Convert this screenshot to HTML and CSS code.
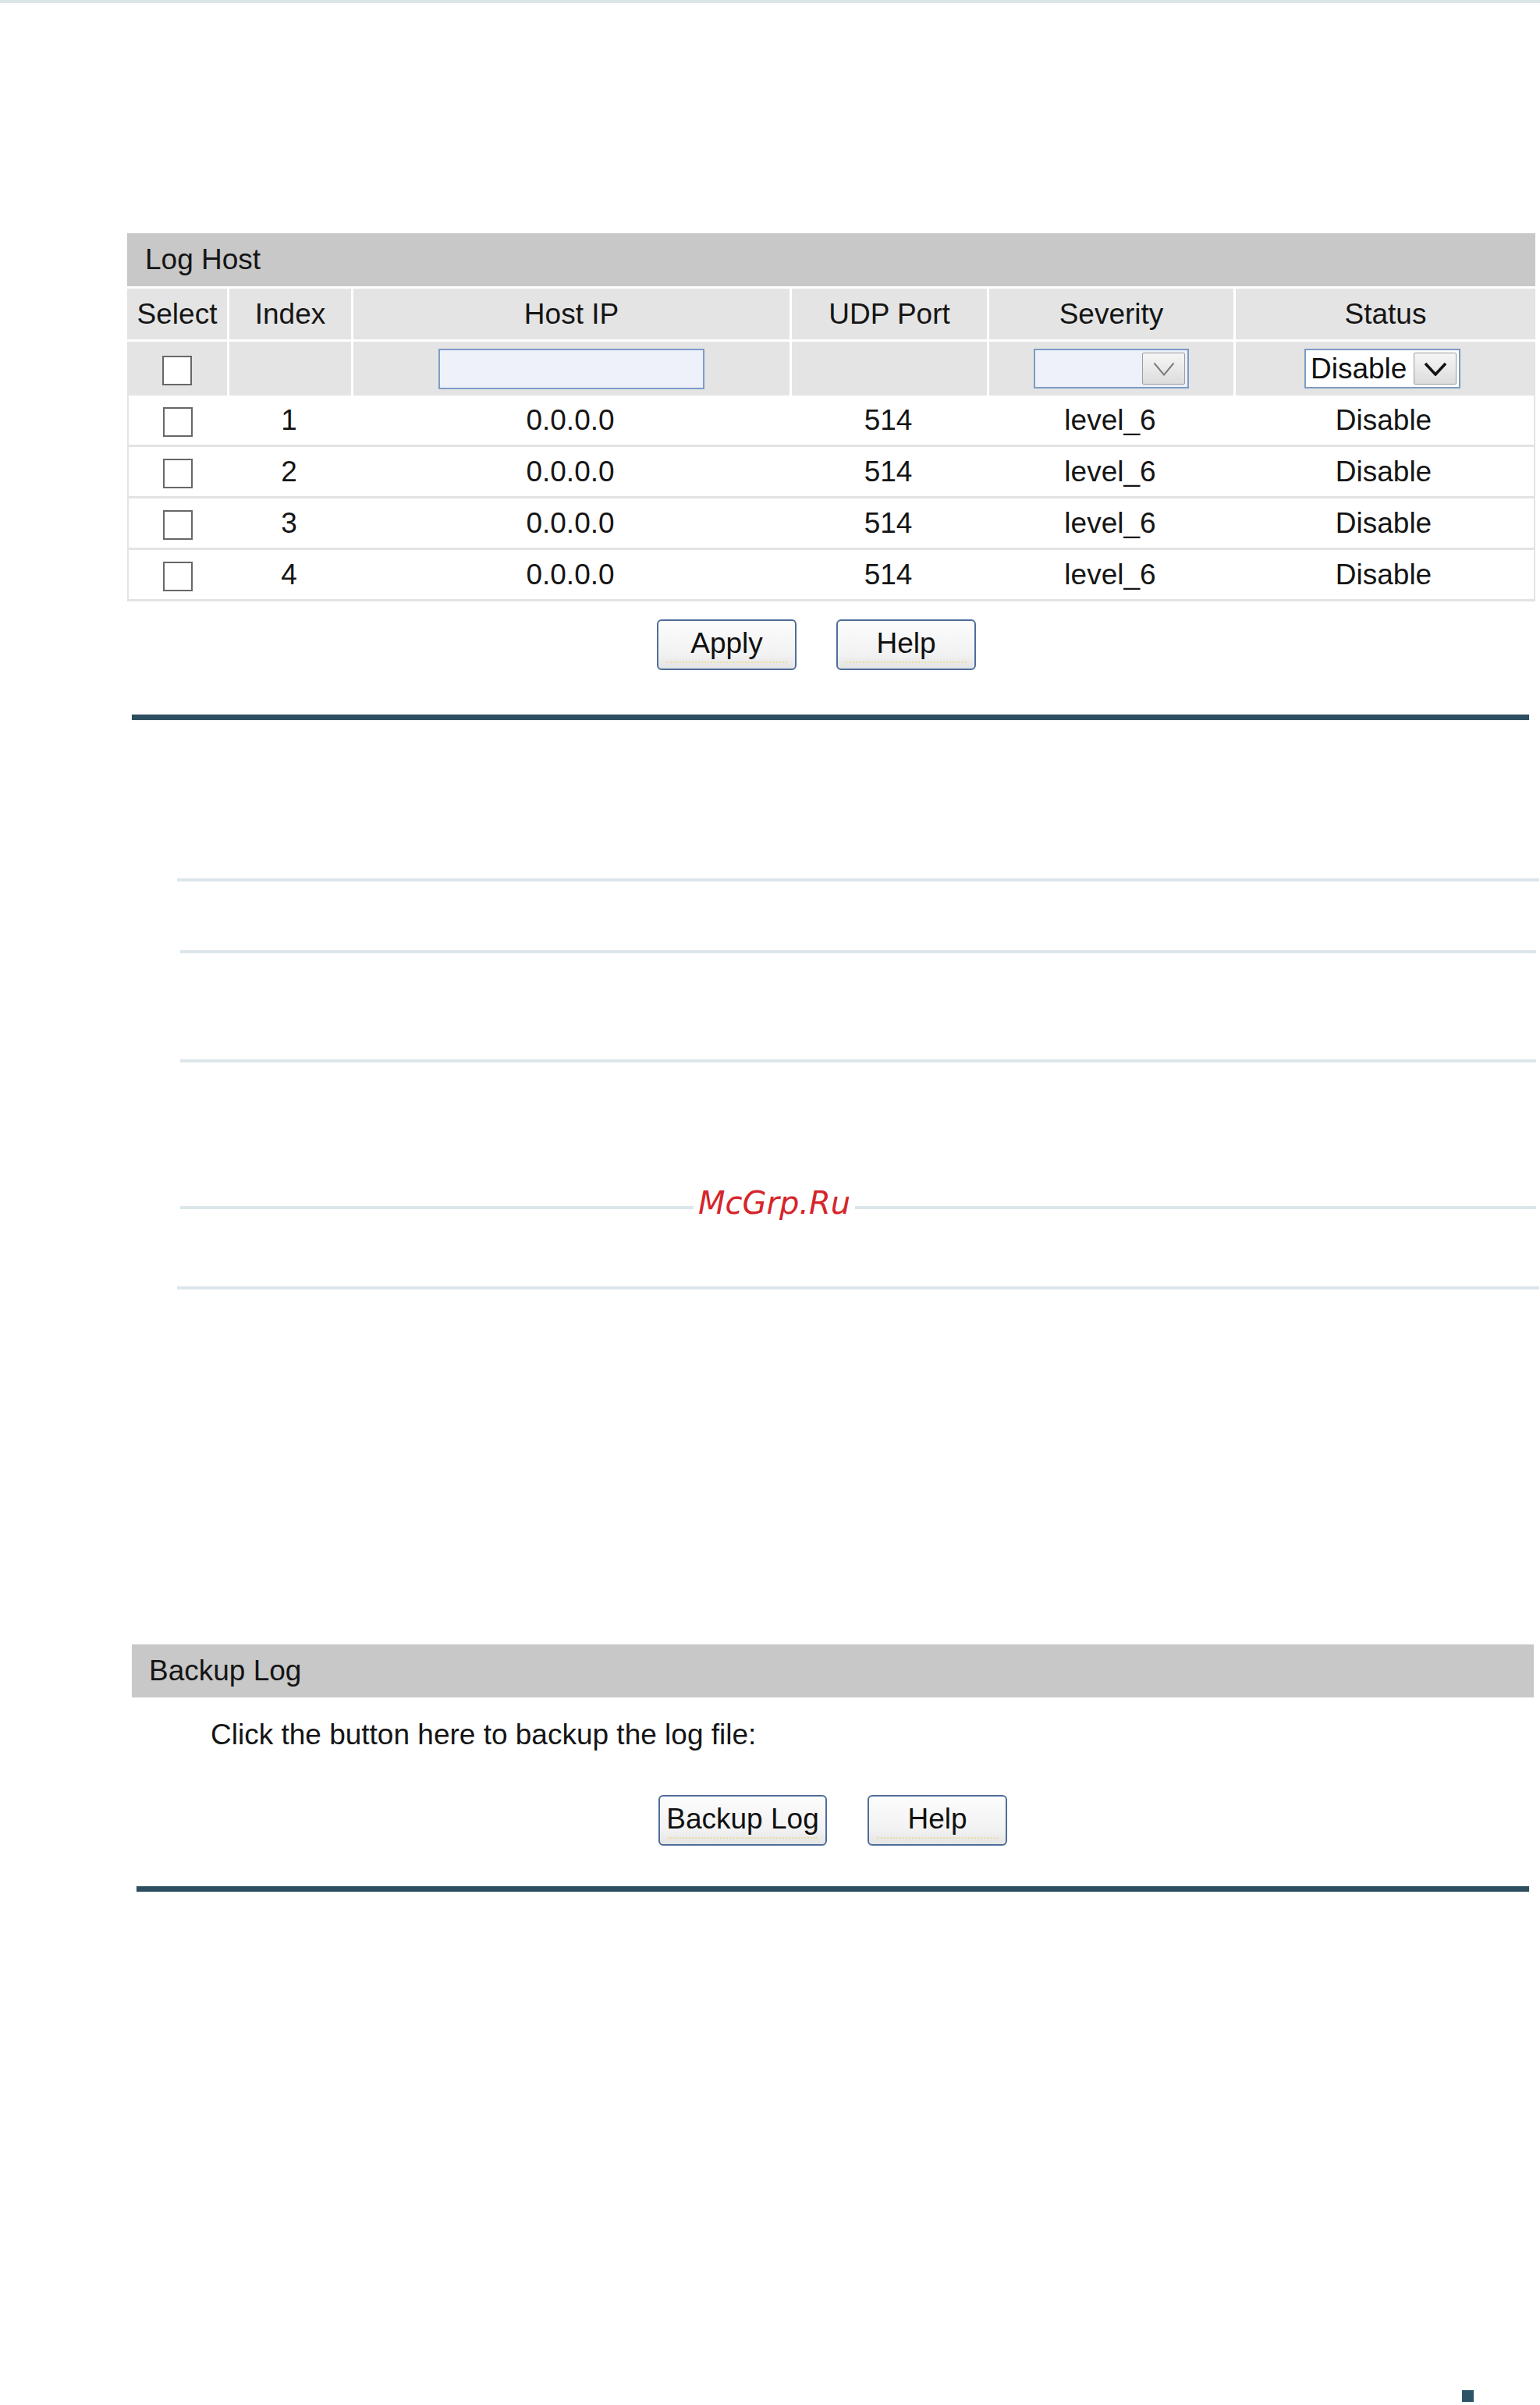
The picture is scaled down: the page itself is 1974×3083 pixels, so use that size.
FILE: index.html
```html
<!DOCTYPE html>
<html lang="en">
<head>
    <meta charset="UTF-8">
    <meta name="viewport" content="width=device-width, initial-scale=1.0">
    <title>Log Host</title>
    <link rel="stylesheet" href="styles.css">
</head>
<body>
    <div class="topline"></div>

    <section class="panel log-host">
        <div class="panel-title">Log Host</div>
        <table class="grid">
            <colgroup>
                <col class="c-select">
                <col class="c-index">
                <col class="c-ip">
                <col class="c-port">
                <col class="c-sev">
                <col class="c-status">
            </colgroup>
            <thead>
                <tr>
                    <th>Select</th>
                    <th>Index</th>
                    <th>Host IP</th>
                    <th>UDP Port</th>
                    <th>Severity</th>
                    <th>Status</th>
                </tr>
            </thead>
            <tbody>
                <tr class="filter">
                    <td><input type="checkbox" class="check"></td>
                    <td></td>
                    <td><input type="text" class="field"></td>
                    <td></td>
                    <td>
                        <div class="select">
                            <span class="select-value"></span>
                            <span class="select-arrow">
                                <svg width="28" height="18" viewBox="0 0 28 18"><polyline points="1.5,1.5 14,16.5 26.5,1.5" fill="none" stroke="#7c7c7c" stroke-width="2"/></svg>
                            </span>
                        </div>
                    </td>
                    <td>
                        <div class="select select-status">
                            <span class="select-value">Disable</span>
                            <span class="select-arrow">
                                <svg width="30" height="18" viewBox="0 0 30 18"><polyline points="2,2 15,16 28,2" fill="none" stroke="#111" stroke-width="3.5"/></svg>
                            </span>
                        </div>
                    </td>
                </tr>
                <tr class="entry">
                    <td><input type="checkbox" class="check"></td>
                    <td>1</td>
                    <td>0.0.0.0</td>
                    <td>514</td>
                    <td>level_6</td>
                    <td>Disable</td>
                </tr>
                <tr class="entry">
                    <td><input type="checkbox" class="check"></td>
                    <td>2</td>
                    <td>0.0.0.0</td>
                    <td>514</td>
                    <td>level_6</td>
                    <td>Disable</td>
                </tr>
                <tr class="entry">
                    <td><input type="checkbox" class="check"></td>
                    <td>3</td>
                    <td>0.0.0.0</td>
                    <td>514</td>
                    <td>level_6</td>
                    <td>Disable</td>
                </tr>
                <tr class="entry">
                    <td><input type="checkbox" class="check"></td>
                    <td>4</td>
                    <td>0.0.0.0</td>
                    <td>514</td>
                    <td>level_6</td>
                    <td>Disable</td>
                </tr>
            </tbody>
        </table>
        <div class="actions actions-shift">
            <button class="btn">Apply</button>
            <button class="btn">Help</button>
        </div>
    </section>

    <div class="rule"></div>

    <div class="notes">
        <div class="note-line wide"></div>
        <div class="note-line l2"></div>
        <div class="note-line l3"></div>
        <div class="note-line l4"></div>
        <div class="note-line wide l5"></div>
        <span class="watermark">McGrp.Ru</span>
    </div>

    <section class="panel backup">
        <div class="panel-title">Backup Log</div>
        <p class="hint">Click the button here to backup the log file:</p>
        <div class="actions">
            <button class="btn btn-wide">Backup Log</button>
            <button class="btn">Help</button>
        </div>
    </section>

    <div class="rule rule-2"></div>

    <div class="page-mark"></div>
</body>
</html>
```

FILE: styles.css
```css
* {
    box-sizing: border-box;
}

body {
    margin: 0;
    background-color: #fff;
    font-family: "Liberation Sans", Arial, sans-serif;
    font-size: 37px;
    color: #151515;
}

.topline {
    height: 4px;
    background-color: #dce6ea;
}


/* panels */

.panel-title {
    height: 68px;
    line-height: 68px;
    padding-left: 23px;
    background-color: #c8c8c8;
    color: #151515;
}

.log-host {
    margin: 295px 0 0 163px;
    width: 1805px;
}

.backup {
    margin: 455px 0 0 169px;
    width: 1797px;
}

.backup .panel-title {
    padding-left: 22px;
}

.hint {
    margin: 27px 0 0 101px;
    line-height: 42px;
}


/* table */

.grid {
    width: 1805px;
    table-layout: fixed;
    border-collapse: separate;
    border-spacing: 0;
}

.c-select { width: 128px; }
.c-index { width: 159px; }
.c-ip { width: 562px; }
.c-port { width: 253px; }
.c-sev { width: 316px; }
.c-status { width: 387px; }

.grid th,
.grid td {
    padding: 0;
    text-align: center;
    vertical-align: middle;
    font-weight: normal;
    color: #151515;
}

.grid th {
    height: 68px;
    background-color: #e4e4e4;
    border-top: 3px solid #fff;
    border-left: 3px solid #fff;
}

.grid .filter td {
    height: 72px;
    background-color: #e4e4e4;
    border-top: 3px solid #fff;
    border-left: 3px solid #fff;
}

.grid th:first-child,
.grid .filter td:first-child {
    border-left: none;
}

.grid .entry td {
    height: 66px;
    border-bottom: 3px solid #e3e3e3;
}

.grid .entry td:first-child {
    border-left: 2px solid #e3e3e3;
}

.grid .entry td:last-child {
    border-right: 2px solid #e3e3e3;
}

.check {
    -webkit-appearance: none;
    appearance: none;
    width: 38px;
    height: 38px;
    margin: 0;
    border: 2px solid #676767;
    background-color: #fff;
    vertical-align: middle;
}

.field {
    width: 341px;
    height: 52px;
    margin: 0;
    border: 2px solid #7d9dc6;
    background-color: #eef0fa;
    vertical-align: middle;
}

.select {
    display: inline-flex;
    width: 199px;
    height: 51px;
    border: 2px solid #7b9cc4;
    background-color: #eef0fa;
    vertical-align: middle;
}

.select-status {
    width: 200px;
    margin-right: 8px;
    background-color: #fff;
}

.select-value {
    flex: 1;
    padding-left: 6px;
    text-align: left;
    line-height: 47px;
    color: #111;
}

.select-arrow {
    display: flex;
    align-items: center;
    justify-content: center;
    width: 55px;
    margin: 3px 3px 3px 0;
    border: 1px solid #9c9c9c;
    border-radius: 2px;
    background: linear-gradient(#f6f6f6, #dcdcdc);
}


/* buttons */

.actions {
    display: flex;
    justify-content: center;
    gap: 52px;
}

.log-host .actions {
    margin-top: 23px;
    gap: 51px;
}

.actions-shift {
    padding-right: 38px;
}

.backup .actions {
    margin-top: 56px;
}

.btn {
    position: relative;
    width: 179px;
    height: 65px;
    padding: 0 0 4px;
    border: 2px solid #4f6d9b;
    border-radius: 6px;
    background: linear-gradient(#fcfcfc 0%, #f2f2f2 70%, #e4e4e4 100%);
    font-family: "Liberation Sans", Arial, sans-serif;
    font-size: 37px;
    color: #111;
    cursor: pointer;
}

.btn::after {
    content: "";
    position: absolute;
    left: 10px;
    right: 10px;
    bottom: 7px;
    border-top: 2px dotted #efdc9c;
}

.btn-wide {
    width: 216px;
}


/* separators */

.rule {
    margin: 57px 0 0 169px;
    width: 1791px;
    height: 7px;
    background-color: #2d4e5f;
    box-shadow: 0 0 1px #9fb2bc;
}

.rule-2 {
    margin: 52px 0 0 175px;
    width: 1785px;
}

.notes {
    position: relative;
    padding-top: 203px;
}

.note-line {
    height: 4px;
    margin-left: 231px;
    width: 1738px;
    background-color: #dce6ea;
}

.note-line.wide {
    margin-left: 227px;
    width: 1746px;
}

.note-line.l2 { margin-top: 88px; }
.note-line.l3 { margin-top: 136px; }
.note-line.l4 { margin-top: 184px; }
.note-line.l5 { margin-top: 99px; }

.watermark {
    position: absolute;
    top: 596px;
    left: 889px;
    padding: 0 6px;
    line-height: 46px;
    background-color: #fff;
    font-family: "DejaVu Sans", sans-serif;
    font-style: italic;
    font-size: 40px;
    color: #d6252b;
}

.page-mark {
    margin: 639px 0 0 1874px;
    width: 15px;
    height: 15px;
    background-color: #2c5466;
}
```
